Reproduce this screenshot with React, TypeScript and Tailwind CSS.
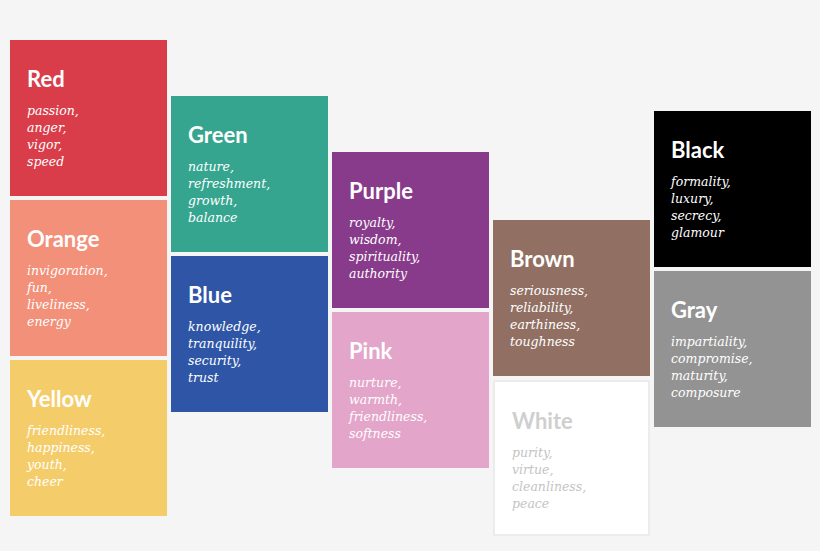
const cols: { mt: string; cards: { n: string; bg: string; t: string; d: string; words: string[]; border?: boolean }[] }[] = [
  { mt: "mt-[40px]", cards: [
    { n: "Red", bg: "bg-[#d93d4a]", t: "text-white", d: "text-white", words: ["passion,", "anger,", "vigor,", "speed"] },
    { n: "Orange", bg: "bg-[#f29079]", t: "text-white", d: "text-white", words: ["invigoration,", "fun,", "liveliness,", "energy"] },
    { n: "Yellow", bg: "bg-[#f4cd6a]", t: "text-white", d: "text-white", words: ["friendliness,", "happiness,", "youth,", "cheer"] },
  ]},
  { mt: "mt-[96px]", cards: [
    { n: "Green", bg: "bg-[#36a58f]", t: "text-white", d: "text-white", words: ["nature,", "refreshment,", "growth,", "balance"] },
    { n: "Blue", bg: "bg-[#2f56a6]", t: "text-white", d: "text-white", words: ["knowledge,", "tranquility,", "security,", "trust"] },
  ]},
  { mt: "mt-[152px]", cards: [
    { n: "Purple", bg: "bg-[#883b8a]", t: "text-white", d: "text-white", words: ["royalty,", "wisdom,", "spirituality,", "authority"] },
    { n: "Pink", bg: "bg-[#e3a5c9]", t: "text-white", d: "text-white", words: ["nurture,", "warmth,", "friendliness,", "softness"] },
  ]},
  { mt: "mt-[220px]", cards: [
    { n: "Brown", bg: "bg-[#917063]", t: "text-white", d: "text-white", words: ["seriousness,", "reliability,", "earthiness,", "toughness"] },
    { n: "White", bg: "bg-white", t: "text-[#cfcfcf]", d: "text-[#c4c4c4]", words: ["purity,", "virtue,", "cleanliness,", "peace"], border: true },
  ]},
  { mt: "mt-[111px]", cards: [
    { n: "Black", bg: "bg-black", t: "text-white", d: "text-white", words: ["formality,", "luxury,", "secrecy,", "glamour"] },
    { n: "Gray", bg: "bg-[#939393]", t: "text-white", d: "text-white", words: ["impartiality,", "compromise,", "maturity,", "composure"] },
  ]},
];

export default function App() {
  return (
    <div className="w-[820px] h-[551px] bg-[#f5f5f5] flex gap-[4px] pl-[10px] overflow-hidden">
      {cols.map((c, i) => (
        <div key={i} className={`${c.mt} flex flex-col gap-[4px] w-[157px]`}>
          {c.cards.map((k) => (
            <div key={k.n} className={`${k.bg} h-[156px] pl-[17px] pt-[24px] ${k.border ? "border-2 border-[#ececec]" : ""}`}>
              <div className={`${k.t} text-[22px] font-bold leading-[30px]`} style={{ fontFamily: "Lato, 'Open Sans', sans-serif" }}>{k.n}</div>
              <div className={`${k.d} italic text-[13.5px] leading-[17px] mt-[8px]`} style={{ fontFamily: "'DejaVu Serif', Georgia, serif", fontSize: "12.5px" }}>
                {k.words.map((w) => <div key={w}>{w}</div>)}
              </div>
            </div>
          ))}
        </div>
      ))}
    </div>
  );
}
